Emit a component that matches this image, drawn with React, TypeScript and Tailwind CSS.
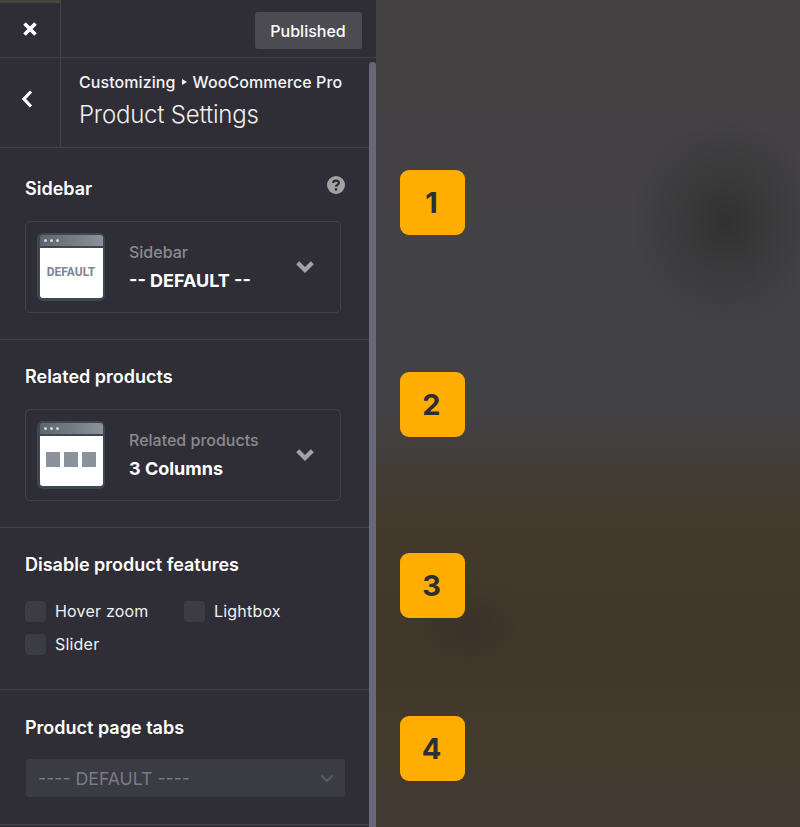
import React from "react";

const Thumb = ({ children }: { children: React.ReactNode }) => (
  <div className="w-[68px] h-[68px] shrink-0 rounded-[6px] bg-[#3f4850] px-[2.5px] pt-[2px] pb-[3px] flex flex-col">
    <div className="h-[11px] rounded-t-[3px] bg-gradient-to-r from-[#5d666e] to-[#8b9298] flex items-center gap-[3px] pl-[4px] shrink-0">
      <span className="w-[3px] h-[3px] rounded-full bg-[#d5d8da]" />
      <span className="w-[3px] h-[3px] rounded-full bg-[#d5d8da]" />
      <span className="w-[3px] h-[3px] rounded-full bg-[#d5d8da]" />
    </div>
    <div className="mt-[2px] flex-1 bg-white rounded-b-[3px] flex items-center justify-center pb-[2px]">{children}</div>
  </div>
);

const Chevron = () => (
  <svg width="18" height="12" viewBox="0 0 18 12" className="shrink-0">
    <path d="M0.2 3.2 L3.2 0.2 L9 6 L14.8 0.2 L17.8 3.2 L9 12 Z" fill="#a3a3a6" />
  </svg>
);

const Picker = ({ thumb, label, value }: { thumb: React.ReactNode; label: string; value: string }) => (
  <div className="h-[92px] w-[316px] rounded-[5px] border border-[#424249] flex items-center pl-[11px]">
    <Thumb>{thumb}</Thumb>
    <div className="ml-[24px] w-[167px] shrink-0">
      <div className="text-[16px] leading-[20px] font-medium text-[#8b8b8f] -mt-[1px]">{label}</div>
      <div className="mt-[9px] text-[18px] leading-[20px] font-bold text-white">{value}</div>
    </div>
    <Chevron />
  </div>
);

const Check = ({ label, cls }: { label: string; cls?: string }) => (
  <label className={"flex items-center gap-[9px] " + (cls ?? "")}>
    <span className="w-[21px] h-[21px] rounded-[4px] bg-[#3c3c43] shrink-0" />
    <span className="text-[16px] leading-[21px] tracking-[0.2px] text-[#f1f1f3]">{label}</span>
  </label>
);

const Badge = ({ n, cls }: { n: number; cls: string }) => (
  <div className={"w-[65px] h-[65px] ml-[24px] pr-[2px] rounded-[9px] bg-[#ffae00] flex items-center justify-center text-[29px] font-bold text-[#2f2e36] " + cls}>
    {n}
  </div>
);

const Heading = ({ children }: { children: React.ReactNode }) => (
  <h3 className="text-[18px] leading-[24px] font-semibold text-white">{children}</h3>
);

export default function App() {
  return (
    <div className="w-[800px] h-[827px] overflow-hidden flex bg-[#444244] font-['Inter','Liberation_Sans',sans-serif]">
      <aside className="w-[376px] h-full shrink-0 flex flex-col bg-[#2f2e36]">
        <div className="h-[58px] shrink-0 flex items-center border-b border-[#434349]">
          <div className="w-[61px] h-full border-t-[3px] border-t-[#46463f] border-r border-r-[#434349] flex items-center justify-center pb-[3px]">
            <svg width="16" height="16" viewBox="0 0 16 16">
              <path d="M2.5 2.5 L13.5 13.5 M13.5 2.5 L2.5 13.5" stroke="#fff" strokeWidth="3.6" />
            </svg>
          </div>
          <button className="ml-auto mr-[14px] mt-[4px] w-[107px] h-[37px] rounded-[3px] bg-[#4c4b52] text-[16px] font-medium text-white flex items-center justify-center pr-[1px]">
            Published
          </button>
        </div>

        <div className="flex-1 min-h-0 flex">
          <div className="w-[369px] shrink-0">
            <div className="h-[90px] flex border-b border-[#434349]">
              <div className="w-[61px] h-full border-r border-[#434349] flex items-center justify-center pr-[6px] pb-[8px]">
                <svg width="14" height="20" viewBox="0 0 14 20">
                  <path d="M11 2.5 L4 10 L11 17.5" fill="none" stroke="#fff" strokeWidth="3.2" />
                </svg>
              </div>
              <div className="pl-[18px] pt-[14px]">
                <div className="text-[16px] leading-[20px] font-medium tracking-[0.08px] text-[#f4f4f6] flex items-center">
                  Customizing
                  <span className="mx-[6px] inline-block w-0 h-0 border-y-[3px] border-y-transparent border-l-[5px] border-l-[#f4f4f6]" />
                  WooCommerce Pro
                </div>
                <div className="mt-[7px] text-[24px] leading-[32px] font-light text-[#eeeef0] tracking-[-0.2px]">Product Settings</div>
              </div>
            </div>

            <section className="h-[192px] pl-[25px] pt-[29px] border-b border-[#434349] relative">
              <Heading>Sidebar</Heading>
              <svg width="18" height="18" viewBox="0 0 18 18" className="absolute right-[24px] top-[28px]">
                <circle cx="9" cy="9" r="9" fill="#a3a3a6" />
                <path d="M6.2 7 C6.2 3.9 11.8 3.9 11.8 7 C11.8 9 9 9 9 10.8" fill="none" stroke="#2f2e36" strokeWidth="2.3" />
                <rect x="7.8" y="12.2" width="2.4" height="2.4" fill="#2f2e36" />
              </svg>
              <div className="mt-[20px]">
                <Picker
                  label="Sidebar"
                  value="-- DEFAULT --"
                  thumb={<span className="text-[12px] font-bold text-[#7d8590] font-['Roboto','Liberation_Sans',sans-serif]">DEFAULT</span>}
                />
              </div>
            </section>

            <section className="h-[188px] pl-[25px] pt-[25px] border-b border-[#434349]">
              <Heading>Related products</Heading>
              <div className="mt-[20px]">
                <Picker
                  label="Related products"
                  value="3 Columns"
                  thumb={
                    <div className="flex gap-[4px] -mt-[1px]">
                      <span className="w-[14px] h-[15px] bg-[#8b929c]" />
                      <span className="w-[14px] h-[15px] bg-[#8b929c]" />
                      <span className="w-[14px] h-[15px] bg-[#8b929c]" />
                    </div>
                  }
                />
              </div>
            </section>

            <section className="h-[162px] pl-[25px] pt-[25px] border-b border-[#434349]">
              <Heading>Disable product features</Heading>
              <div className="mt-[24px] flex flex-wrap w-[300px] gap-y-[12px]">
                <Check label="Hover zoom" cls="w-[159px]" />
                <Check label="Lightbox" />
                <Check label="Slider" cls="w-[159px]" />
              </div>
            </section>

            <section className="h-[135px] pl-[25px] pt-[26px] border-b border-[#434349]">
              <Heading>Product page tabs</Heading>
              <div className="mt-[19px] ml-[1px] w-[319px] h-[38px] rounded-[3px] bg-[#3b3b42] flex items-center justify-between pl-[12px] pr-[11px]">
                <span className="text-[17.7px] pt-[3px] text-[#7a7a8c]">---- DEFAULT ----</span>
                <svg width="14" height="9" viewBox="0 0 14 9">
                  <path d="M1.5 1.5 L7 7 L12.5 1.5" fill="none" stroke="#5b5b63" strokeWidth="2" />
                </svg>
              </div>
            </section>
          </div>
          <div className="w-[7px] mt-[4px] rounded-t-[4px] bg-[#686779]" />
        </div>
      </aside>

      <main className="flex-1 relative overflow-hidden bg-[linear-gradient(180deg,#444243_0%,#424144_50%,#433d37_57%,#43392b_64%,#423829_80%,#433a2e_92%,#423a34_100%)]">
        <div className="absolute inset-0 bg-[radial-gradient(ellipse_95px_105px_at_350px_222px,#323132_0%,rgba(50,49,50,0.55)_40%,rgba(50,49,50,0)_100%),radial-gradient(ellipse_70px_50px_at_93px_628px,#3b3129_0%,rgba(59,49,41,0)_100%)]" />
        <div className="relative">
          <Badge n={1} cls="mt-[170px]" />
          <Badge n={2} cls="mt-[137px]" />
          <Badge n={3} cls="mt-[116px]" />
          <Badge n={4} cls="mt-[98px]" />
        </div>
      </main>
    </div>
  );
}
